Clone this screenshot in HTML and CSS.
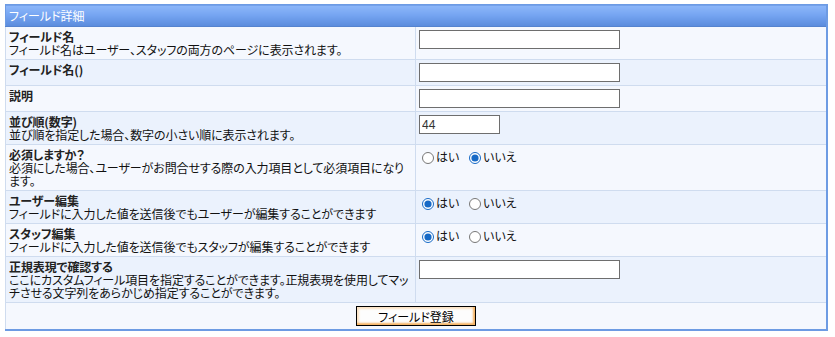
FILE: index.html
```html
<!DOCTYPE html>
<html lang="ja">
<head>
  <meta charset="UTF-8">
  <title>フィールド詳細</title>
  <link rel="stylesheet" href="styles.css">
</head>
<body>
  <form>
    <table class="field-table">
      <tr>
        <th colspan="2" class="title">フィールド詳細</th>
      </tr>
      <tr class="row-a">
        <td class="label"><b>フィールド名</b><br>フィールド名はユーザー、スタッフの両方のページに表示されます。</td>
        <td class="value"><input type="text" class="text"></td>
      </tr>
      <tr class="row-b">
        <td class="label"><b>フィールド名()</b></td>
        <td class="value"><input type="text" class="text"></td>
      </tr>
      <tr class="row-a">
        <td class="label"><b>説明</b></td>
        <td class="value"><input type="text" class="text"></td>
      </tr>
      <tr class="row-b">
        <td class="label"><b>並び順(数字)</b><br>並び順を指定した場合、数字の小さい順に表示されます。</td>
        <td class="value"><input type="text" class="text short" value="44"></td>
      </tr>
      <tr class="row-a">
        <td class="label"><b>必須しますか？</b><br>必須にした場合、ユーザーがお問合せする際の入力項目として必須項目になり<span class="nobr">ます。</span></td>
        <td class="value">
          <label class="choice"><input type="radio" name="required">はい</label>
          <label class="choice"><input type="radio" name="required" checked>いいえ</label>
        </td>
      </tr>
      <tr class="row-b">
        <td class="label"><b>ユーザー編集</b><br>フィールドに入力した値を送信後でもユーザーが編集することができます</td>
        <td class="value">
          <label class="choice"><input type="radio" name="useredit" checked>はい</label>
          <label class="choice"><input type="radio" name="useredit">いいえ</label>
        </td>
      </tr>
      <tr class="row-a">
        <td class="label"><b>スタッフ編集</b><br>フィールドに入力した値を送信後でもスタッフが編集することができます</td>
        <td class="value">
          <label class="choice"><input type="radio" name="staffedit" checked>はい</label>
          <label class="choice"><input type="radio" name="staffedit">いいえ</label>
        </td>
      </tr>
      <tr class="row-b">
        <td class="label"><b>正規表現で確認する</b><br>ここにカスタムフィール項目を指定することができます。正規表現を使用してマッチさせる文字列をあらかじめ指定することができます。</td>
        <td class="value"><input type="text" class="text"></td>
      </tr>
      <tr class="row-a">
        <td colspan="2" class="actions"><button type="button" class="boton">フィールド登録</button></td>
      </tr>
    </table>
  </form>
</body>
</html>
```

FILE: styles.css
```css
body {
  margin: 4px 5px;
  font-family: "Noto Sans CJK JP", sans-serif;
  font-size: 12px;
  font-feature-settings: "palt";
  color: #111;
  background: #fff;
}
.field-table {
  width: 823px;
  border-collapse: collapse;
  border: 1px solid #6d9be3;
  border-right-width: 2px;
  border-bottom-width: 2px;
}
.title {
  height: 21px;
  padding: 0 3px;
  text-align: left;
  font-weight: normal;
  color: #fff;
  background: linear-gradient(#8db7f9, #76a5f2 45%, #5a8bdc);
  border-bottom: 1px solid #5583cf;
}
.field-table td {
  border: 1px solid #cfdcef;
  padding: 3px;
  line-height: 13px;
  vertical-align: top;
}
.row-a td {
  background: #f5f8fe;
}
.row-b td {
  background: #ebf2fd;
}
.field-table .label {
  width: 406px;
  padding-right: 0;
  letter-spacing: -0.1px;
}
.label b {
  color: #222;
}
.nobr {
  white-space: nowrap;
}
.text {
  box-sizing: border-box;
  width: 201px;
  height: 19px;
  margin: 0;
  padding: 0 2px;
  border: 1px solid #6e6e6e;
  font-family: "Liberation Sans", sans-serif;
  font-size: 12px;
  color: #333;
  background: #fff;
}
.short {
  width: 81px;
}
.choice {
  margin-right: 4px;
}
.choice input {
  width: 12px;
  height: 12px;
  margin: 4px 2px 0 3px;
  vertical-align: -2px;
  accent-color: #1669c6;
}
.actions {
  text-align: center;
}
.boton {
  width: 120px;
  height: 20px;
  padding: 0;
  border: 1px solid #000;
  background: #fdfdfd;
  box-shadow: inset -2px -2px 2px #f4b263, inset 2px 2px 2px #fbe3c4;
  font-family: "Noto Sans CJK JP", sans-serif;
  font-size: 12px;
  font-feature-settings: "palt";
  color: #000;
  cursor: pointer;
}
```
